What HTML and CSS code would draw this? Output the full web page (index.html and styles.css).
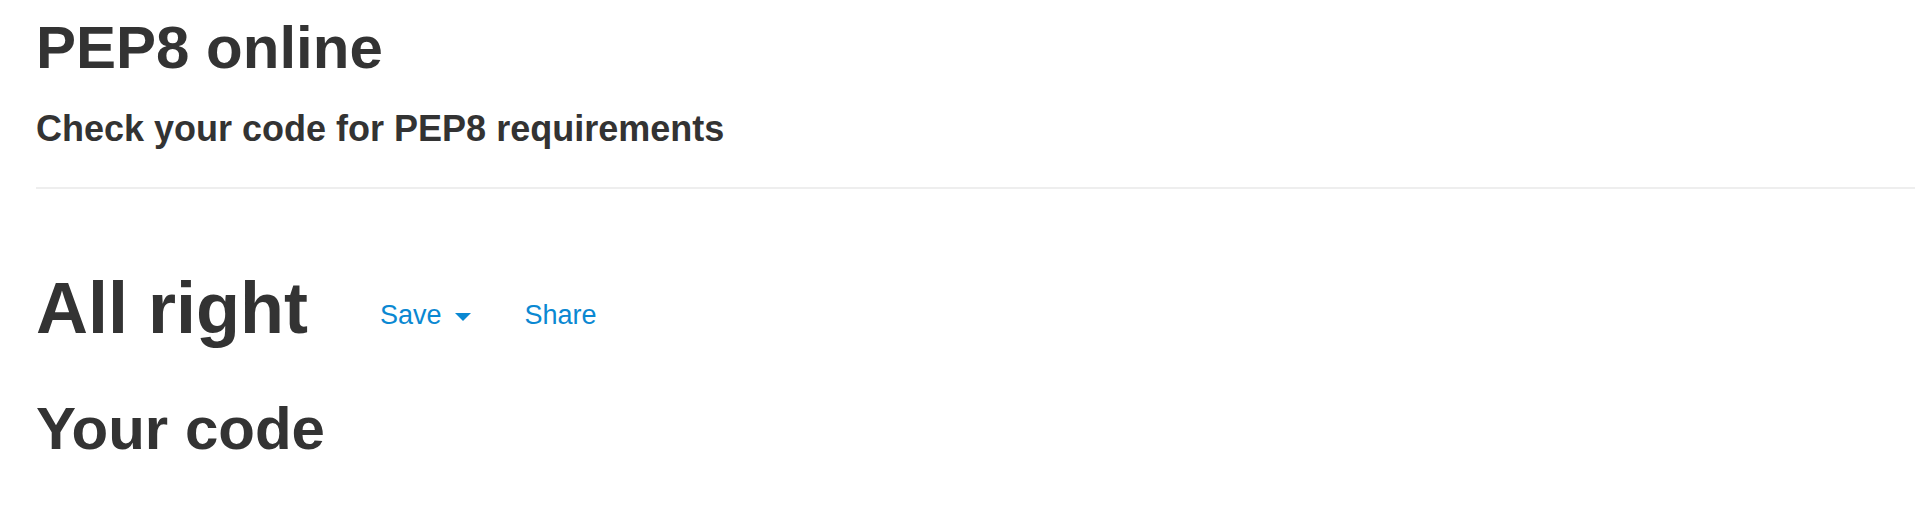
FILE: index.html
```html
<!DOCTYPE html>
<html lang="en">
<head>
<meta charset="utf-8">
<title>PEP8 online</title>
<link rel="stylesheet" href="styles.css">
</head>
<body>
<div class="page">
  <header class="page-header">
    <h1 class="site-title">PEP8 online</h1>
    <h3 class="site-subtitle">Check your code for PEP8 requirements</h3>
  </header>
  <section class="result">
    <div class="result-row">
      <h2 class="result-title">All right</h2>
      <div class="result-links">
        <a class="link save-link" href="#">Save<span class="caret"></span></a>
        <a class="link share-link" href="#">Share</a>
      </div>
    </div>
    <h1 class="code-title">Your code</h1>
  </section>
</div>
</body>
</html>
```

FILE: styles.css
```css
html, body {
  margin: 0;
  padding: 0;
  background: #fff;
}
body {
  font-family: "Liberation Sans", Arial, Helvetica, sans-serif;
  color: #333;
}
.page {
  padding: 15px 0 0 36px;
}
.page-header {
  border-bottom: 2px solid #eee;
  padding-bottom: 38px;
}
.site-title {
  margin: 0;
  font-size: 60px;
  line-height: 66px;
  font-weight: bold;
}
.site-subtitle {
  margin: 28px 0 0 0;
  font-size: 36px;
  line-height: 40px;
  font-weight: bold;
}
.result {
  padding-top: 79px;
}
.result-row {
  display: flex;
  align-items: flex-start;
}
.result-title {
  margin: 0;
  font-size: 72px;
  line-height: 80px;
  font-weight: bold;
}
.result-links {
  display: flex;
  align-items: center;
  margin-top: 32px;
  margin-left: 72px;
  font-size: 27px;
  line-height: 30px;
}
.link {
  color: #0a88d2;
  text-decoration: none;
  display: inline-flex;
  align-items: center;
}
.caret {
  display: inline-block;
  width: 0;
  height: 0;
  margin-left: 13px;
  margin-top: 4px;
  border-top: 8px solid #0a88d2;
  border-left: 8px solid transparent;
  border-right: 8px solid transparent;
}
.share-link {
  margin-left: 54px;
}
.code-title {
  margin: 48px 0 0 0;
  font-size: 60px;
  line-height: 66px;
  font-weight: bold;
}
```
